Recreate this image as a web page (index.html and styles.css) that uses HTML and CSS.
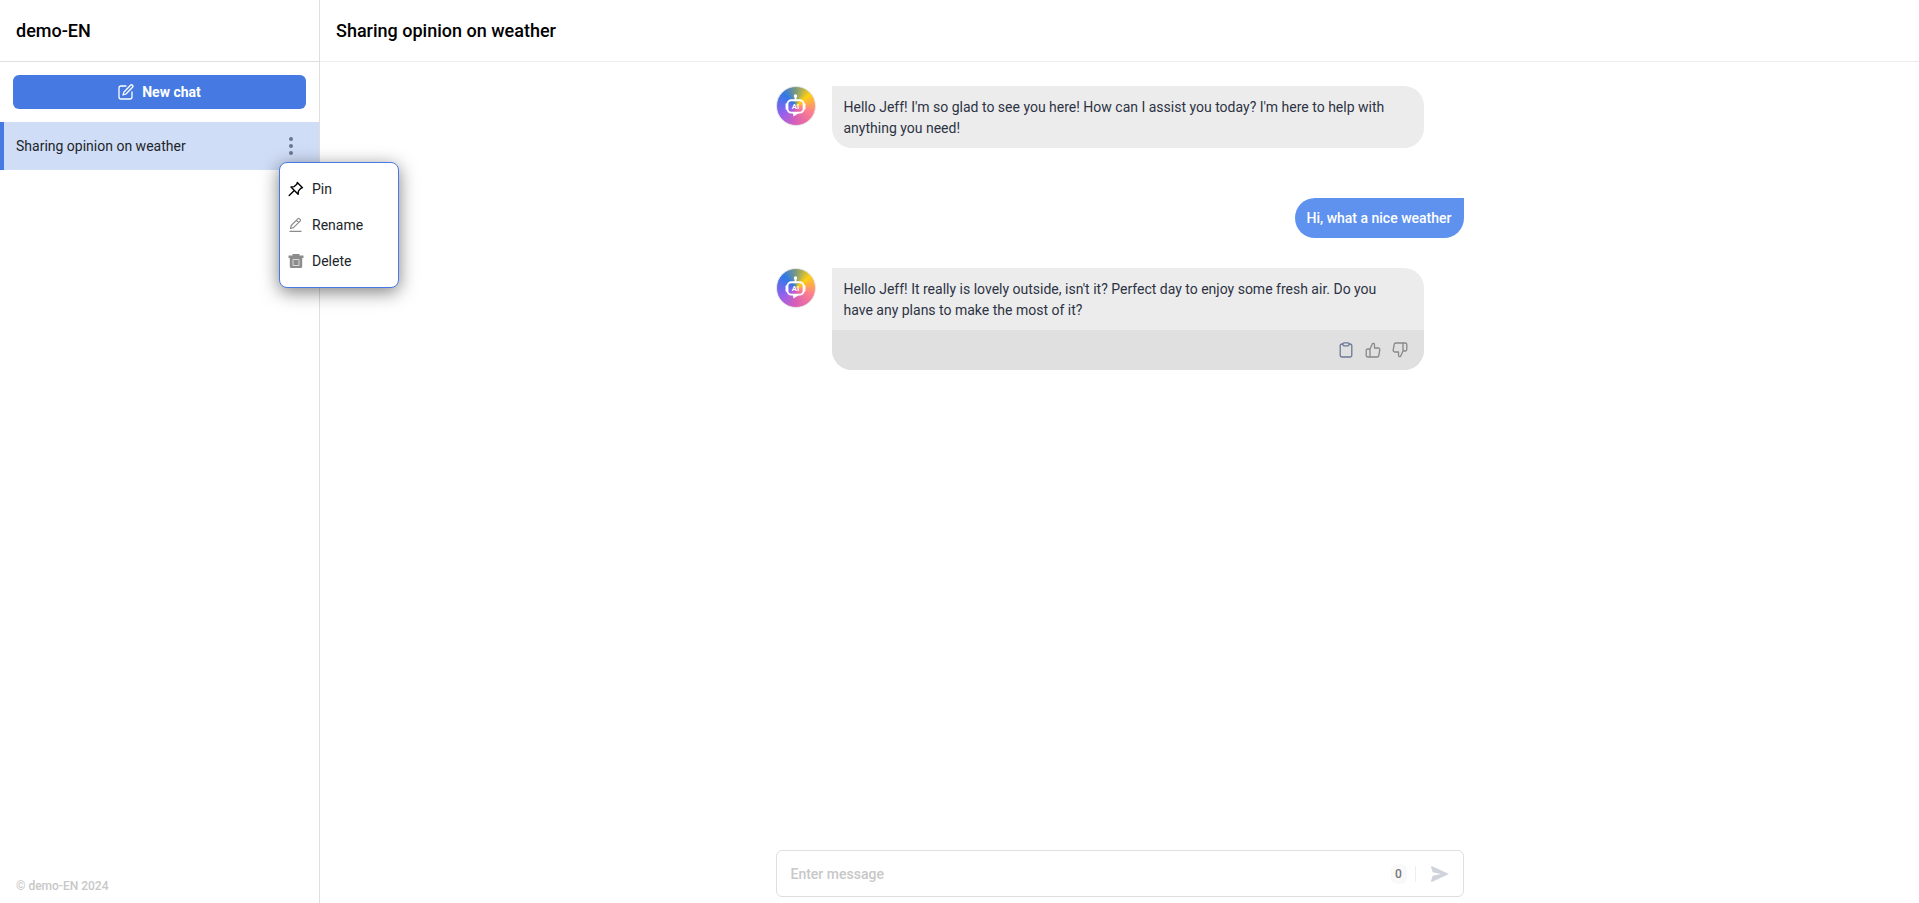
FILE: index.html
```html
<!DOCTYPE html>
<html lang="en">
<head>
<meta charset="utf-8">
<title>demo-EN</title>
<link rel="stylesheet" href="styles.css">
</head>
<body>
<div class="app">
  <aside class="sidebar">
    <header class="bar"><h1 class="title">demo-EN</h1></header>
    <div class="actions">
      <button class="new-chat" type="button">
        <svg width="16" height="16" viewBox="0 0 16 16" fill="none" stroke="currentColor" stroke-width="1.300" stroke-linecap="round" stroke-linejoin="round"><path d="M8 2H3a2 2 0 0 0-2 2v9a2 2 0 0 0 2 2h9a2 2 0 0 0 2-2V8"/><path d="M12.500 1.300a1.400 1.400 0 0 1 2 2L8 10l-3 1 1-3z"/></svg>
        New chat
      </button>
    </div>
    <nav class="chat-list">
      <div class="chat-item">
        <a class="chat-link" href="#chat">Sharing opinion on weather</a>
        <button class="more" type="button" aria-label="Chat options">
          <svg width="6" height="18" viewBox="0 0 6 18" fill="currentColor"><circle cx="3" cy="2" r="2"/><circle cx="3" cy="9" r="2"/><circle cx="3" cy="16" r="2"/></svg>
        </button>
        <div class="menu">
          <button class="menu-item" type="button">
            <svg class="icon-pin" width="16" height="16" viewBox="0 0 16 16" fill="none" stroke="currentColor" stroke-width="1.400" stroke-linejoin="round" stroke-linecap="round"><path d="M9.300 1.500l5.200 5.200-1.700.6-2.300 2.600-.4 3.400L3 6l3.200-.4L8.800 3.300zM6 9.700L1.200 14.400"/></svg>
            Pin
          </button>
          <button class="menu-item" type="button">
            <svg class="icon-grey" width="16" height="16" viewBox="0 0 16 16" fill="none" stroke="currentColor" stroke-width="1.200" stroke-linejoin="round"><path d="M2.500 11.500l.7-3 6.600-6.700a1.200 1.200 0 0 1 1.700 0l.6.600a1.200 1.200 0 0 1 0 1.700l-6.600 6.600zM8.500 3.300l2.300 2.300M1.500 14.400h12"/></svg>
            Rename
          </button>
          <button class="menu-item" type="button">
            <svg class="icon-grey" width="16" height="16" viewBox="0 0 16 16" fill="currentColor"><path d="M4.500 1h7v1.500H15.500V5H.5V2.500h4zM1.800 5h12.400v8.500a1.500 1.500 0 0 1-1.500 1.500H3.300a1.500 1.500 0 0 1-1.500-1.500z"/><path d="M5 6.500h6v6H5z" fill="none" stroke="#d8d8d8"/></svg>
            Delete
          </button>
        </div>
      </div>
    </nav>
    <footer class="copyright">© demo-EN 2024</footer>
  </aside>
  <main class="main">
    <header class="bar"><h2 class="title">Sharing opinion on weather</h2></header>
    <section class="thread" id="chat">
      <article class="message">
        <svg class="avatar" viewBox="0 0 40 40">
          <rect class="bot-head" x="11" y="14" width="17" height="13" rx="4"/>
          <path class="bot-head" d="M19.500 10v4M10 18v5M29 18v5"/>
          <path class="bot-fill" d="M16.500 27h7l-6 4z"/>
          <circle class="bot-fill" cx="19.500" cy="9.500" r="1.800"/>
          <text class="bot-label" x="19.500" y="23.500" text-anchor="middle">AI</text>
        </svg>
        <div class="bubble"><p class="text">Hello Jeff! I'm so glad to see you here! How can I assist you today? I'm here to help with anything you need!</p></div>
      </article>
      <article class="message own">
        <div class="bubble"><p class="text">Hi, what a nice weather</p></div>
      </article>
      <article class="message">
        <svg class="avatar" viewBox="0 0 40 40">
          <rect class="bot-head" x="11" y="14" width="17" height="13" rx="4"/>
          <path class="bot-head" d="M19.500 10v4M10 18v5M29 18v5"/>
          <path class="bot-fill" d="M16.500 27h7l-6 4z"/>
          <circle class="bot-fill" cx="19.500" cy="9.500" r="1.800"/>
          <text class="bot-label" x="19.500" y="23.500" text-anchor="middle">AI</text>
        </svg>
        <div class="bubble">
          <p class="text">Hello Jeff! It really is lovely outside, isn't it? Perfect day to enjoy some fresh air. Do you have any plans to make the most of it?</p>
          <div class="tools">
            <button class="tool copy" type="button" aria-label="Copy"><svg width="16" height="16" viewBox="0 0 16 16"><path d="M5 2H4a1.800 1.800 0 0 0-1.800 1.800v9.400A1.800 1.800 0 0 0 4 15h8a1.800 1.800 0 0 0 1.800-1.800V3.800A1.800 1.800 0 0 0 12 2h-1"/><rect x="5" y=".8" width="6" height="3" rx="1"/></svg></button>
            <button class="tool" type="button" aria-label="Good response"><svg width="16" height="16" viewBox="0 0 16 16"><path d="M5 7l2.500-5.500q2-.8 2 1.700V6h3.700a1.600 1.600 0 0 1 1.600 1.900l-1 5.700a1.600 1.600 0 0 1-1.600 1.400H5zM5 7H2.600A1.400 1.400 0 0 0 1.200 8.400v5.200A1.400 1.400 0 0 0 2.600 15H5"/></svg></button>
            <button class="tool" type="button" aria-label="Bad response"><svg width="16" height="16" viewBox="0 0 16 16"><path d="M11 9l-2.500 5.500q-2 .8-2-1.700V10H2.800a1.600 1.600 0 0 1-1.600-1.900l1-5.700A1.600 1.600 0 0 1 3.800 1H11zM11 9h2.400a1.400 1.400 0 0 0 1.400-1.400V2.400A1.400 1.400 0 0 0 13.400 1H11"/></svg></button>
          </div>
        </div>
      </article>
    </section>
    <form class="composer">
      <input class="field" type="text" placeholder="Enter message" aria-label="Enter message">
      <span class="count">0</span>
      <button class="send" type="button" aria-label="Send"><svg width="18" height="16" viewBox="0 0 18 16" fill="currentColor"><path d="M.7 0L18 8 .7 16 0 15l1.700-5.300L10 8 1.700 6.300 0 1z"/></svg></button>
    </form>
  </main>
</div>
</body>
</html>
```
FILE: styles.css
```css
* { box-sizing: border-box; }
body { margin: 0; font: 14px/21px Roboto, sans-serif; color: #212529; background: #fff; }
button, input { font: inherit; color: inherit; }
button { padding: 0; border: 0; background: none; cursor: pointer; }
svg { display: block; flex: none; }
.app { display: flex; min-height: 100vh; }
.sidebar { display: flex; flex-direction: column; width: 320px; border-right: 1px solid #dfdfdf; }
.bar { display: flex; align-items: center; height: 62px; padding: 0 16px; border-bottom: 1px solid #dfdfdf; }
.title { margin: 0; font-size: 18px; font-weight: 500; line-height: 24px; color: #000; }
.actions { padding: 13px; }
.new-chat { display: flex; align-items: center; justify-content: center; gap: 8px; width: 100%; height: 34px; border-radius: 6px; background: #467ae2; color: #fff; font-weight: 700; }
.chat-item { position: relative; display: flex; align-items: center; height: 48px; padding: 0 25px 0 12px; border-left: 4px solid #467ae2; background: #d0ddf7; }
.chat-link { flex: 1; color: #212529; text-decoration: none; }
.more { color: #6b7690; }
.menu { position: absolute; z-index: 1; top: 40px; left: 275px; width: 120px; padding: 8px 0; border: 1px solid #467ae2; border-radius: 8px; background: #fff; box-shadow: 0 4px 18px rgba(0, 0, 0, .5); }
.menu-item { display: flex; align-items: center; gap: 8px; width: 100%; height: 36px; padding: 0 8px; }
.icon-pin { color: #000; }
.icon-grey { color: #8c8c8c; }
.copyright { margin-top: auto; padding: 8px 16px; font-size: 12px; font-weight: 500; line-height: 18px; color: #c8c8c8; }
.main { display: flex; flex: 1; flex-direction: column; align-items: center; min-width: 0; }
.main .bar { width: 100%; border-color: #ececec; }
.thread { display: flex; flex: 1; flex-direction: column; width: 100%; max-width: 688px; padding-top: 24px; }
.message { display: flex; align-items: flex-start; gap: 16px; margin-bottom: 30px; padding-right: 40px; }
.message.own { justify-content: flex-end; margin-top: 20px; padding-right: 0; }
.avatar { width: 40px; height: 40px; border: 1px solid #e4e4e4; border-radius: 50%; background: conic-gradient(from 0deg, #7c9a7c, #ffd013 50deg, #ff7f8c 110deg, #d95fb5 180deg, #9560ee 240deg, #3078e8 315deg, #7c9a7c); }
.bot-head { fill: none; stroke: #fff; stroke-width: 2; stroke-linecap: round; }
.bot-fill { fill: #fff; }
.bot-label { font: bold 8px Roboto, sans-serif; fill: #fff; }
.bubble { flex: 1; overflow: hidden; border-radius: 0 20px 20px 20px; background: #ececec; color: #2d3344; }
.text { margin: 0; padding: 11px 24px 9px 12px; }
.own .bubble { flex: none; border-radius: 20px 0 20px 20px; background: #5f92ee; color: #fff; font-weight: 500; }
.own .text { padding: 10px 12px 9px; }
.tools { display: flex; align-items: center; justify-content: flex-end; gap: 11px; height: 40px; padding-right: 16px; background: #e0e0e0; }
.tool { color: #888; }
.tool svg { fill: none; stroke: currentColor; stroke-width: 1.3; stroke-linejoin: round; }
.copy { color: #6b7896; }
.composer { display: flex; align-items: center; width: 100%; max-width: 688px; height: 47px; margin-bottom: 6px; padding: 0 14px; border: 1px solid #dfdfdf; border-radius: 6px; }
.field { flex: 1; min-width: 0; padding: 2px 0 0; border: 0; outline: 0; font-weight: 500; }
.field::placeholder { color: #c8c8c8; opacity: 1; }
.count { width: 16px; border-radius: 6px; background: #f9f9f9; color: #777; font-size: 12px; font-weight: 500; line-height: 20px; text-align: center; }
.send { margin-left: 8px; padding-left: 15px; border-left: 1px solid #eee; color: #d0d3dc; }
```
